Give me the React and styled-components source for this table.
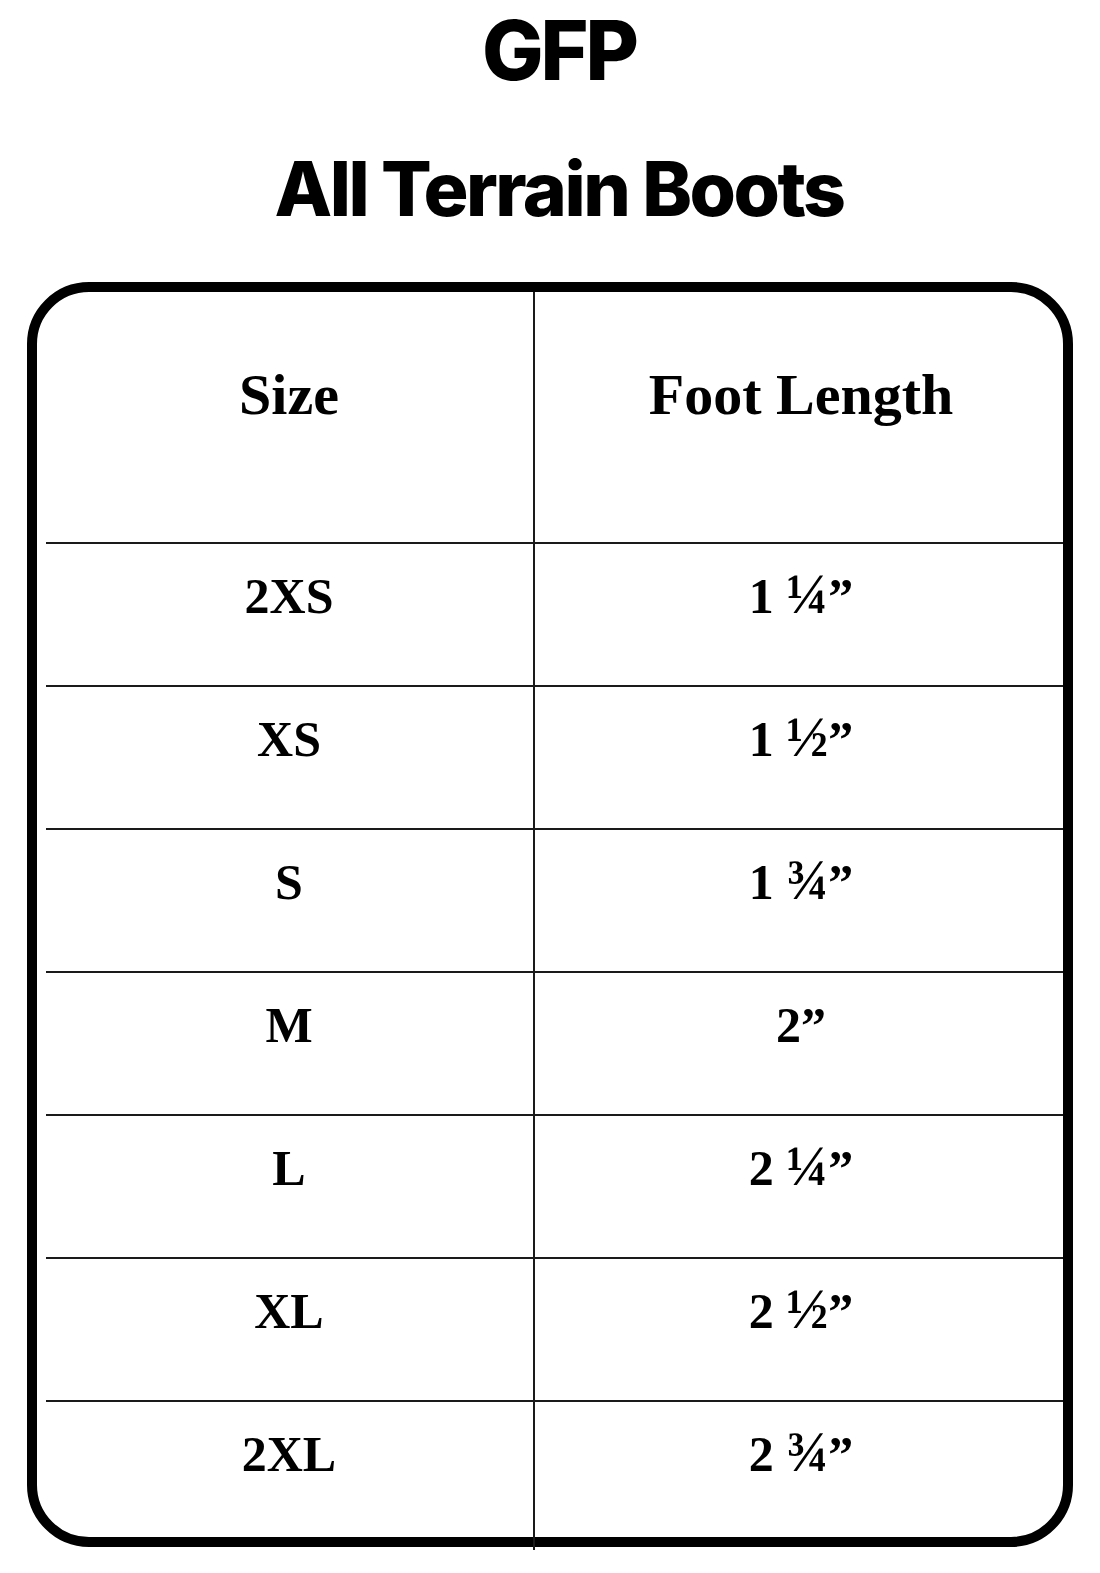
import React from "react";
import styled, { createGlobalStyle } from "styled-components";

const Global = createGlobalStyle`
  html, body { margin: 0; padding: 0; background: #ffffff; }
  body { width: 1100px; }
`;

const Page = styled.div`
  width: 1100px;
  min-height: 1573px;
  box-sizing: border-box;
  padding-top: 10px;
  background: #ffffff;
  display: flex;
  flex-direction: column;
  align-items: center;
`;

const Header = styled.header`
  display: flex;
  flex-direction: column;
  align-items: center;
  padding-left: 18px;
`;

const Brand = styled.h1`
  margin: 0;
  font-family: "Inter", "Lato", sans-serif;
  font-weight: 800;
  font-size: 82px;
  line-height: 1;
  letter-spacing: -3px;
  color: #000;
  text-align: center;
`;

const Product = styled.h2`
  margin: 59px 0 0;
  font-family: "Inter", "Lato", sans-serif;
  font-weight: 800;
  font-size: 75px;
  line-height: 1;
  letter-spacing: -2.5px;
  color: #000;
  text-align: center;
`;

const Card = styled.div`
  position: relative;
  margin-top: 56px;
  width: 1046px;
  box-sizing: border-box;
  border: 10px solid #000;
  border-radius: 62px;
  display: grid;
  grid-template-columns: 497px 1fr;
`;

const Divider = styled.div`
  position: absolute;
  left: 496px;
  top: 0;
  bottom: -13px;
  width: 2px;
  background: #1a1a1a;
`;

const Cell = styled.div`
  box-sizing: border-box;
  height: ${(p) => p.$h}px;
  padding-top: ${(p) => p.$pad}px;
  display: flex;
  justify-content: center;
  align-items: flex-start;
  border-bottom: ${(p) => (p.$last ? "none" : "2px solid #1a1a1a")};
  ${(p) => (p.$left ? "margin-left: 9px; padding-right: 2px;" : "padding-left: 5px;")}
`;

const Label = styled.span`
  font-family: "Liberation Serif", "Times New Roman", serif;
  font-weight: 700;
  font-size: ${(p) => p.$size}px;
  line-height: 1;
  color: #000;
  white-space: nowrap;
`;

const Frac = styled.span`
  font-size: 1.12em;
  line-height: 0;
`;

const rows = [
  ["2XS", "1", "¼"],
  ["XS", "1", "½"],
  ["S", "1", "¾"],
  ["M", "2", ""],
  ["L", "2", "¼"],
  ["XL", "2", "½"],
  ["2XL", "2", "¾"],
];

export default function App() {
  return (
    <Page>
      <Global />
      <Header>
        <Brand>GFP</Brand>
        <Product>All Terrain Boots</Product>
      </Header>
      <Card>
        <Cell $left $h={252} $pad={74}>
          <Label $size={58}>Size</Label>
        </Cell>
        <Cell $h={252} $pad={74}>
          <Label $size={58}>Foot Length</Label>
        </Cell>
        {rows.map(([size, whole, frac], i) => {
          const last = i === rows.length - 1;
          const h = last ? 135 : 143;
          return (
            <React.Fragment key={size}>
              <Cell $left $h={h} $pad={27} $last={last}>
                <Label $size={50}>{size}</Label>
              </Cell>
              <Cell $h={h} $pad={27} $last={last}>
                <Label $size={50}>
                  {whole}
                  {frac ? " " : ""}
                  {frac ? <Frac>{frac}</Frac> : null}”
                </Label>
              </Cell>
            </React.Fragment>
          );
        })}
        <Divider />
      </Card>
    </Page>
  );
}
